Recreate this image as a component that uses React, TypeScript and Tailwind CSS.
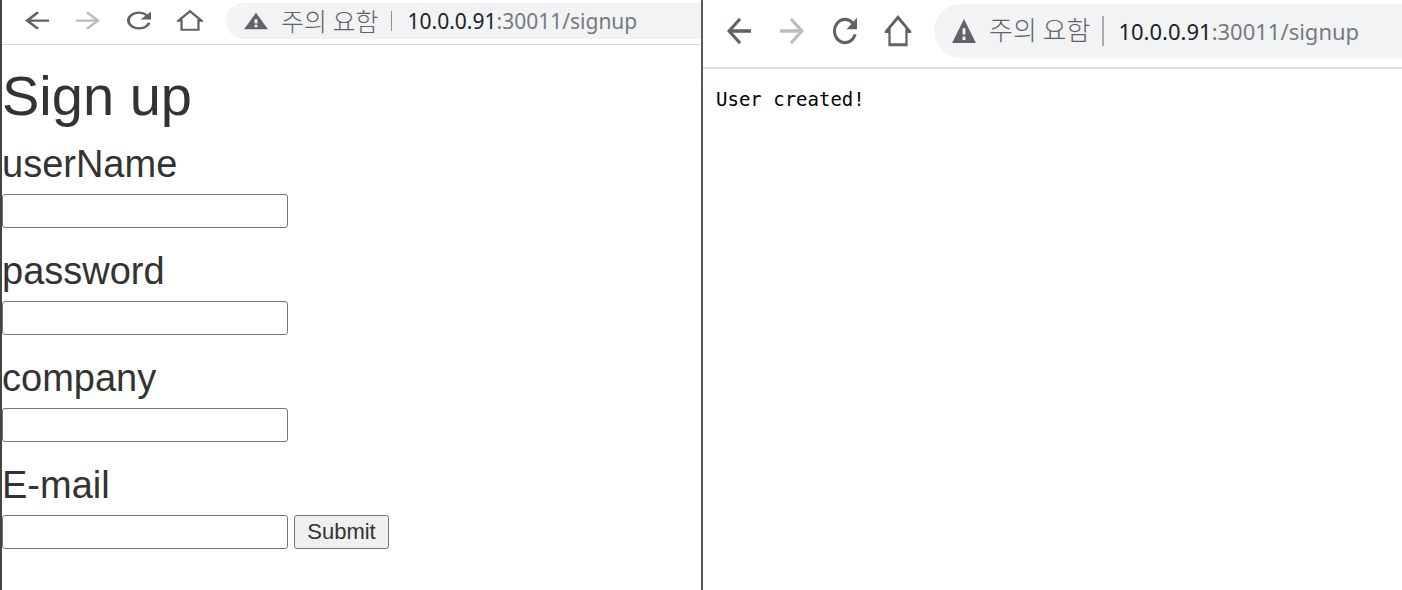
import React from "react";

type IconName = "back" | "forward" | "reload" | "home" | "warning";

const paths: Record<IconName, string> = {
  back: "M20 11H7.83l5.59-5.59L12 4l-8 8 8 8 1.41-1.41L7.83 13H20v-2z",
  forward: "M12 4l-1.41 1.41L16.17 11H4v2h12.17l-5.58 5.59L12 20l8-8z",
  reload:
    "M17.65 6.35A7.96 7.96 0 0 0 12 4c-4.42 0-7.99 3.58-7.99 8s3.57 8 7.99 8c3.73 0 6.84-2.55 7.73-6h-2.08A5.99 5.99 0 0 1 12 18c-3.31 0-6-2.69-6-6s2.69-6 6-6c1.66 0 3.14.69 4.22 1.78L13 11h7V4l-2.35 2.35z",
  home: "M12 2.4L3.2 12V13.2H5.6V21.2H18.4V13.2H20.8V12zM12 5.2L16.9 10.4V19.3H7.1V10.4z",
  warning: "M12 3L1 21h22zM10.7 16.2h2.6v2.6h-2.6zM10.7 10h2.6v4.600h-2.6z",
};

function Icon({ name, className }: { name: IconName; className: string }) {
  return (
    <svg viewBox="0 0 24 24" preserveAspectRatio="none" className={className} fill="currentColor" fillRule="evenodd" aria-hidden="true">
      <path d={paths[name]} />
    </svg>
  );
}

const navItems: { name: IconName; label: string; color: string }[] = [
  { name: "back", label: "Back", color: "text-[#5f6368]" },
  { name: "forward", label: "Forward", color: "text-[#babcbe]" },
  { name: "reload", label: "Reload", color: "text-[#5f6368]" },
  { name: "home", label: "Home", color: "text-[#5f6368]" },
];

function Toolbar({ large = false }: { large?: boolean }) {
  return (
    <header
      className={
        large
          ? "flex h-[69px] items-center border-b-2 border-[#dfe1e5] pb-1.5 pl-[18px]"
          : "flex h-[45px] items-center border-b border-[#d5d7db] pb-[3px] pl-[17px]"
      }
    >
      <nav className={large ? "flex gap-[17px]" : "flex gap-[15px]"}>
        {navItems.map((item) => (
          <button key={item.name} type="button" aria-label={item.label} className={item.color}>
            <Icon name={item.name} className={large ? "h-10 w-9" : "h-[27px] w-9"} />
          </button>
        ))}
      </nav>
      <div
        className={
          large
            ? "ml-[18px] flex h-[54px] min-w-0 flex-1 items-center rounded-l-full bg-[#f1f3f4] pl-[17px]"
            : "ml-[18px] flex h-9 min-w-0 flex-1 items-center rounded-l-full bg-[#f1f3f4] pl-[17px]"
        }
      >
        <Icon name="warning" className={large ? "h-8 w-[26px] shrink-0 text-[#5f6368]" : "h-[22px] w-[26px] shrink-0 text-[#5f6368]"} />
        <span
          className={
            large
              ? "ml-3 whitespace-nowrap pb-1 font-['Noto_Sans_CJK_KR',sans-serif] text-[26px] leading-8 font-light text-[#5f6368]"
              : "ml-3 whitespace-nowrap pb-0.5 font-['Noto_Sans_CJK_KR',sans-serif] text-[25px] leading-8 font-light text-[#5f6368]"
          }
        >
          주의 요함
        </span>
        <span className={large ? "mr-3.5 ml-3 h-[30px] w-0.5 bg-[#a9abae]" : "mr-4 ml-3 h-5 w-px bg-[#8f9194]"} />
        <span
          className={
            large
              ? "whitespace-nowrap font-['Noto_Sans',sans-serif] text-[22px] leading-8 text-[#767a7e]"
              : "whitespace-nowrap font-['Noto_Sans',sans-serif] text-[21px] leading-8 text-[#767a7e]"
          }
        >
          <span className="text-[#202124]">10.0.0.91</span>:30011/signup
        </span>
      </div>
    </header>
  );
}

const fields = [
  { id: "userName", label: "userName", type: "text" },
  { id: "password", label: "password", type: "password" },
  { id: "company", label: "company", type: "text" },
  { id: "email", label: "E-mail", type: "text" },
];

export default function App() {
  return (
    <div className="grid min-h-screen grid-cols-2 bg-white font-['Liberation_Sans',Arial,sans-serif] text-[#333333]">
      <section className="min-w-0 border-l-2 border-[#444444]">
        <Toolbar />
        <main className="pt-5">
          <h1 className="text-[56px] leading-[62px]">Sign up</h1>
          <form className="mt-3.5 flex flex-col gap-5">
            {fields.map((field, index) => (
              <div key={field.id}>
                <label htmlFor={field.id} className="block text-[38px] leading-[46px]">
                  {field.label}
                </label>
                <div className="mt-[7px] flex gap-1.5">
                  <input
                    id={field.id}
                    name={field.id}
                    type={field.type}
                    className="h-[34px] w-[286px] rounded-[3px] border border-[#767676] bg-white px-1 text-xl"
                  />
                  {index === fields.length - 1 && (
                    <button
                      type="submit"
                      className="h-[34px] w-[95px] rounded-[3px] border border-[#767676] bg-[#efefef] text-[22px] leading-8"
                    >
                      Submit
                    </button>
                  )}
                </div>
              </div>
            ))}
          </form>
        </main>
      </section>
      <section className="min-w-0 border-l-2 border-[#5a5a58]">
        <Toolbar large />
        <pre className="px-[13px] py-3.5 font-['DejaVu_Sans_Mono',monospace] text-[19px] leading-8 text-black">User created!</pre>
      </section>
    </div>
  );
}
